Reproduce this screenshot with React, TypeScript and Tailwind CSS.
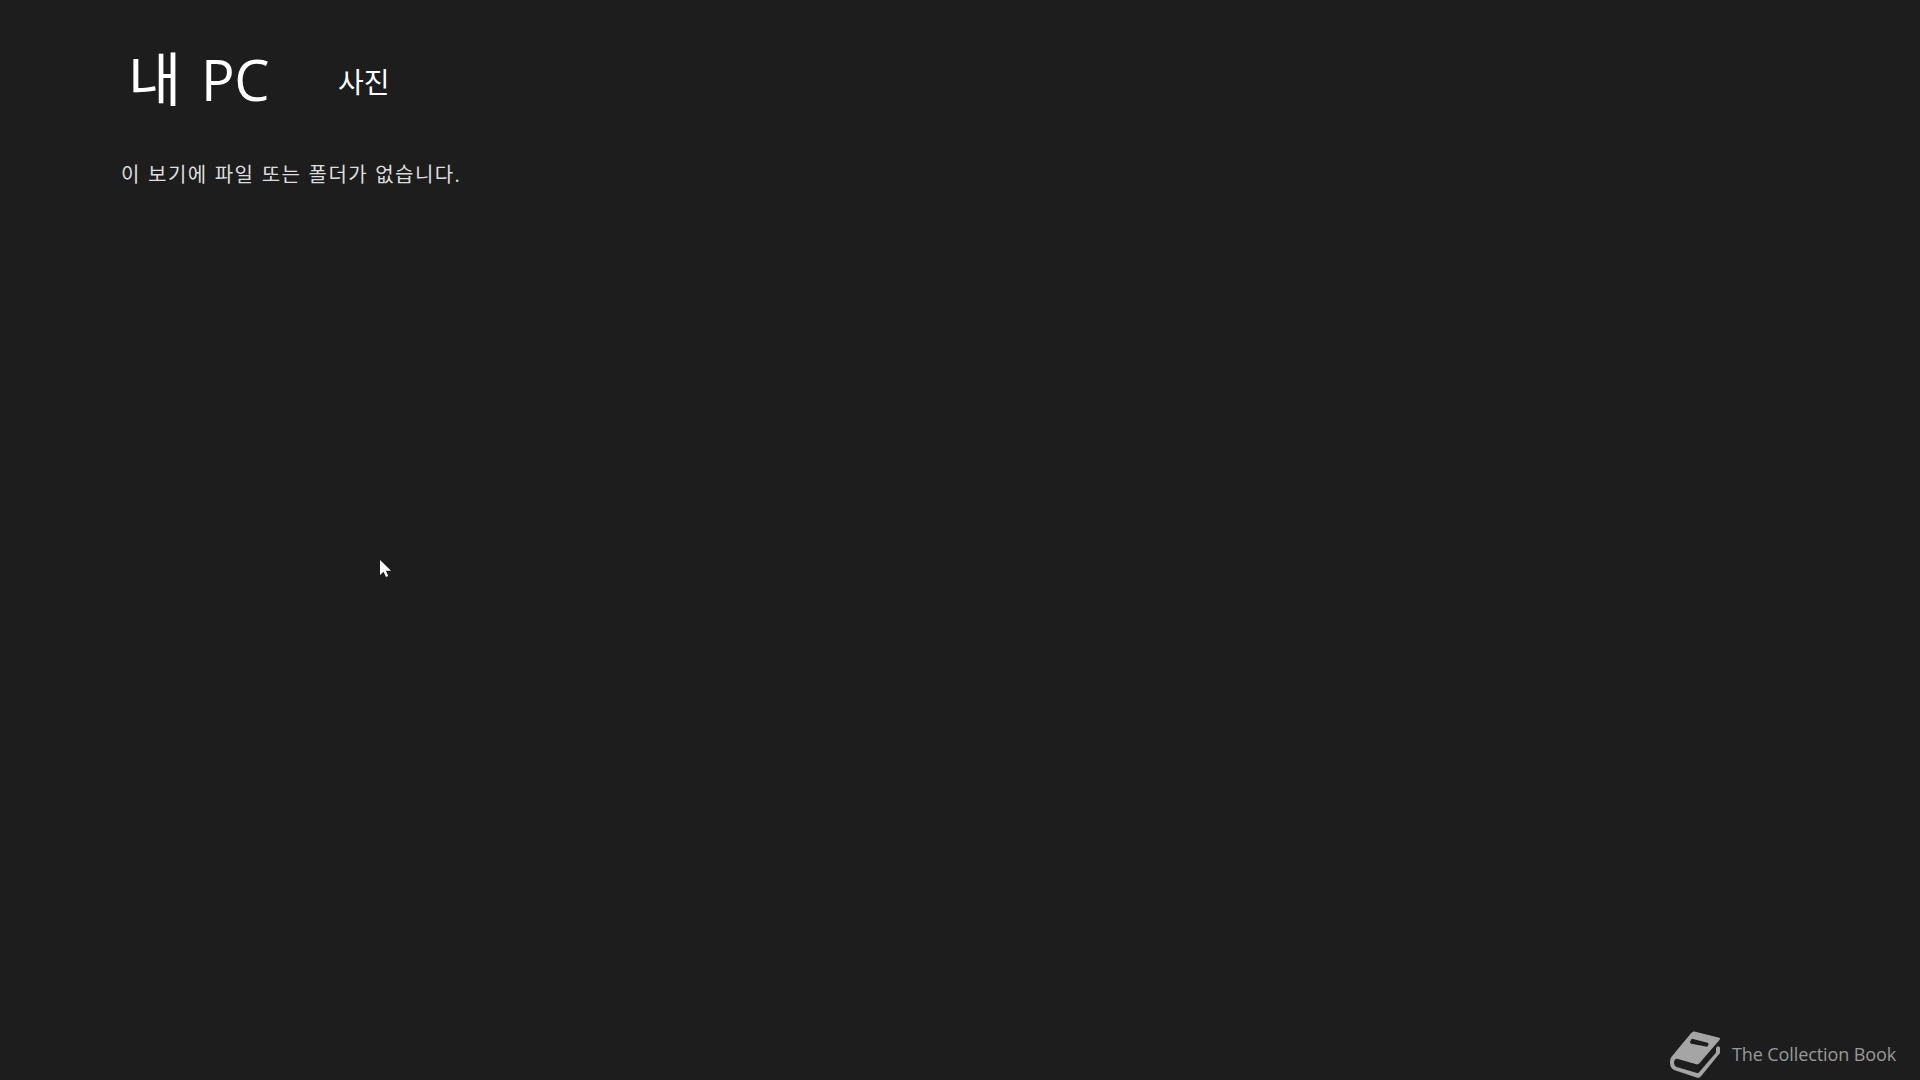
import React from 'react';

const BookIcon = () => (
  <svg viewBox="0 0 156 144" className="h-12 w-[52px] shrink-0">
    <path
      d="M72 2 Q75 1 79 2 L151 20 Q155 22 152 26 L92 96 Q88 101 82 100 L24 83 Q16 84 15 94 Q15 105 23 108 L84 126 Q88 127 91 123 L140 66 Q142 62 141 57 Q140 50 144 47 Q149 44 153 50 L153 66 L96 136 Q91 142 85 140 L15 117 Q3 112 3 94 Q3 80 12 72 Q16 67 20 62 L66 7 Z"
      fill="#a5a5a5"
    />
    <path d="M68 24 Q69 23 72 24 L116 35 Q120 37 118 41 L115 47 L67 38 Q62 37 63 33 Z" fill="#1d1d1d" />
  </svg>
);

const Cursor = () => (
  <svg viewBox="0 0 12 19" className="absolute left-[379px] top-[560px] h-[19px] w-3">
    <path d="M1 0 V15 L4.5 11.8 L7 17 L9.2 16 L7 10.8 H12 Z" fill="#ffffff" />
  </svg>
);

const App = () => {
  return (
    <div className="relative flex h-screen w-full flex-col overflow-hidden bg-[#1d1d1d] font-['Open_Sans','Noto_Sans_CJK_KR',sans-serif] text-white">
      {/* Header */}
      <header className="flex h-[121px] items-start pl-32 pt-[39px]">
        <h1 className="flex items-baseline leading-[80px]">
          <span className="w-[73px] text-[58px]">내</span>
          <span className="w-[137px] text-[56px] tracking-[-0.5px]">PC</span>
        </h1>
        <h2 className="mt-[3px] text-[28px] leading-[80px]">사진</h2>
      </header>

      {/* Empty folder message */}
      <main className="flex-1 pl-[121px] pt-[37px]">
        <p className="text-[20px] leading-[34px] tracking-[1.4px] [word-spacing:0.7px] text-[#dedede]">
          이 보기에 파일 또는 폴더가 없습니다.
        </p>
      </main>

      <footer className="flex h-[49px] items-start justify-end pr-[23px]">
        <BookIcon />
        <span className="ml-[11px] mt-[9px] w-[165px] whitespace-nowrap text-[18px] leading-7 tracking-[-0.1px] text-[#999999]">
          The Collection Book
        </span>
      </footer>

      <Cursor />
    </div>
  );
};

export default App;
